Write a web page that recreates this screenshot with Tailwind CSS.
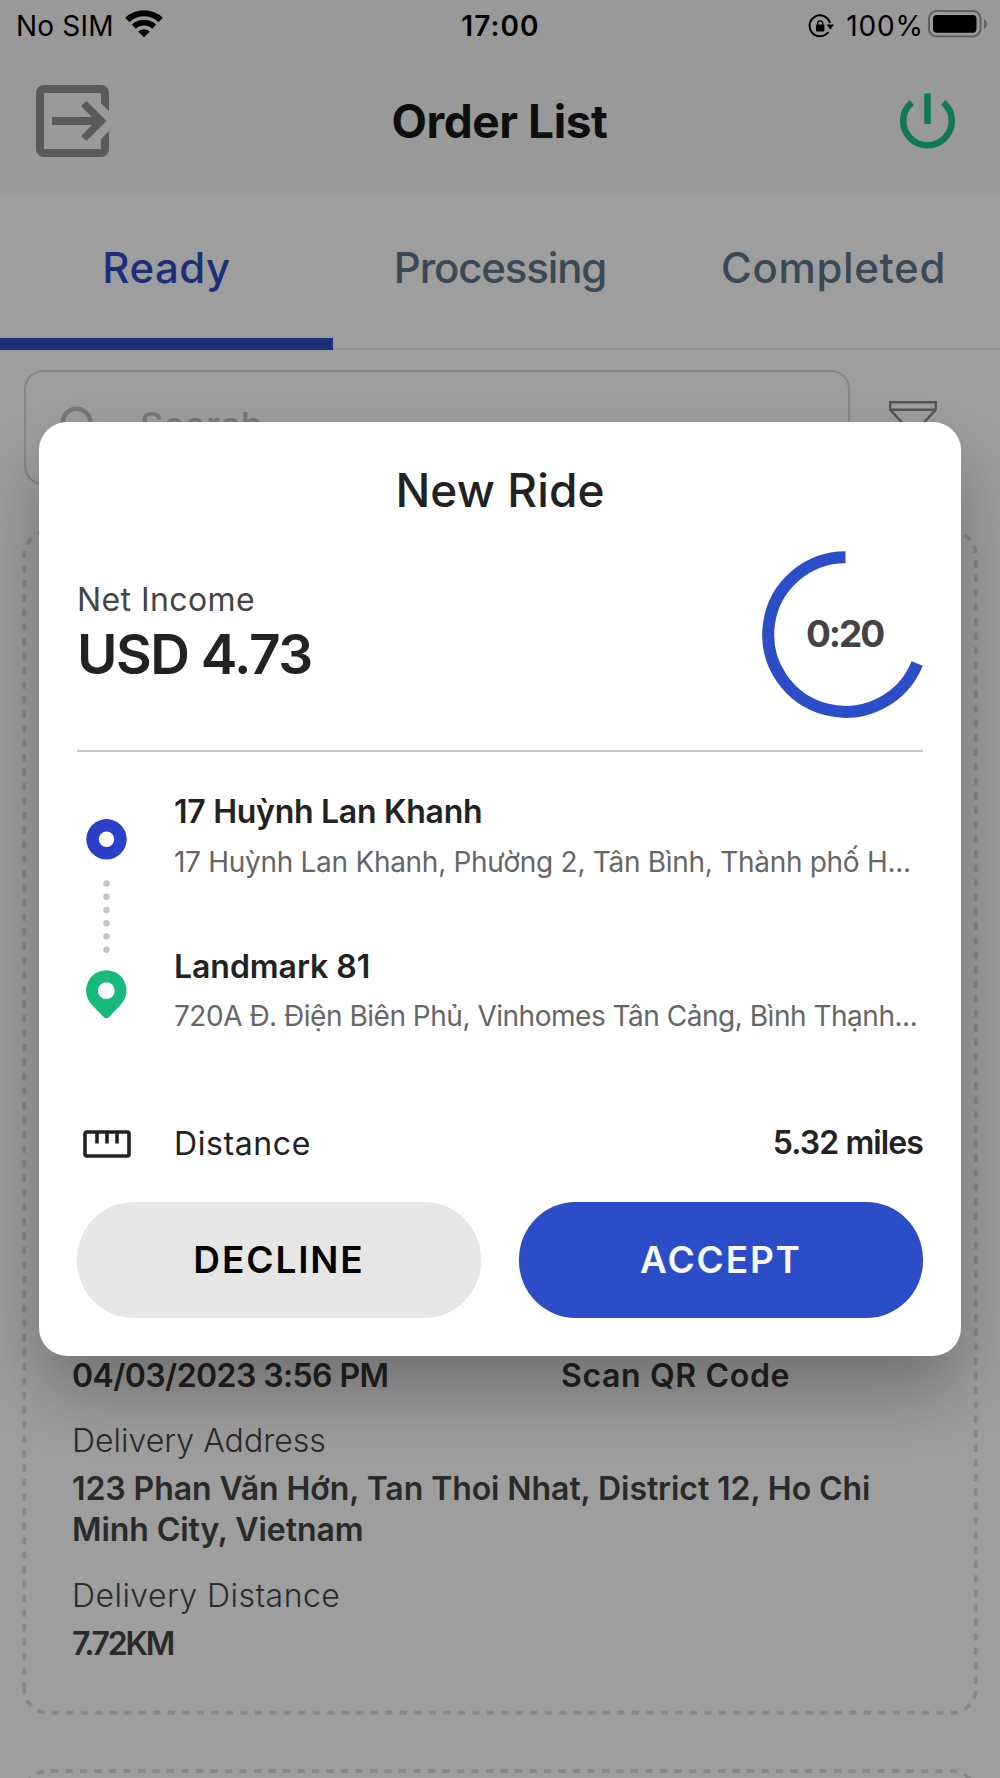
<!DOCTYPE html>
<html lang="vi">
<head>
<meta charset="utf-8">
<title>Order List</title>
<script src="https://cdn.jsdelivr.net/npm/@tailwindcss/browser@4"></script>
</head>
<body class="bg-[#9e9e9e]">
<div class="relative h-[1778px] w-[1000px] overflow-hidden bg-[#9e9e9e] font-['Inter',sans-serif] whitespace-nowrap text-[#2a2a2a]">

  <!-- Header -->
  <header class="h-[193px] bg-[#999]">
    <div class="grid h-[52px] grid-cols-3 items-center pr-3 pl-4 text-[28px] leading-[52px] text-black">
      <div class="flex items-center">
        <span class="tracking-[0.2px]">No SIM</span>
        <svg class="-mt-1 ml-[11px]" width="38" height="28" viewBox="0 0 38 28" fill="none" stroke="#000">
          <path d="M2.3 10A24 24 0 0 1 35.7 10" stroke-width="6"/>
          <path d="M8.8 16.7A14.9 14.9 0 0 1 29.2 16.7" stroke-width="5.8"/>
          <path d="M19 27.3L13.2 21.6Q19 17 24.8 21.6Z" fill="#000" stroke="none"/>
        </svg>
      </div>
      <div class="-ml-[3px] text-center font-semibold tracking-[1.1px]">17:00</div>
      <div class="flex items-center justify-end">
        <svg width="27" height="24" viewBox="0 0 27 24" fill="none" stroke="#000" stroke-width="2">
          <path d="M22 9A10.4 10.4 0 1 0 20.3 18"/>
          <path d="M18.6 10.5H26L22.3 15.8Z" fill="#000" stroke="none"/>
          <rect x="8" y="10.5" width="8.4" height="7" rx="1" fill="#000" stroke="none"/>
          <path d="M9.7 11V9.3a2.5 2.5 0 0 1 5 0V11" stroke-width="1.3"/>
        </svg>
        <span class="ml-[11px] tracking-[0.9px]">100%</span>
        <svg class="-mt-1 ml-[4px]" width="60" height="28" viewBox="0 0 60 28">
          <rect x="1" y="1" width="51.5" height="25.5" rx="7.5" fill="none" stroke="#606060" stroke-width="2"/>
          <rect x="5" y="5" width="43.5" height="17.7" rx="4" fill="#000"/>
          <path d="M56 9Q59 11 59 14T56 19Z" fill="#606060"/>
        </svg>
      </div>
    </div>
    <div class="flex h-[138px] items-center justify-between pr-[45px] pl-9">
      <svg width="73" height="72" viewBox="0 0 73 72" fill="#5a5a5a">
        <path d="M8 0H65a8 8 0 0 1 8 8V26L65 18V8H8V64H65V54L73 46V64a8 8 0 0 1-8 8H8a8 8 0 0 1-8-8V8a8 8 0 0 1 8-8Z"/>
        <path d="M16 32H56L45 21L50.5 16L70.5 36L50.5 56L45 51L56 40H16Z"/>
      </svg>
      <h1 class="-ml-[10px] text-[46px] leading-none font-bold tracking-[-0.4px] text-[#0e0e0e]">Order List</h1>
      <svg width="55" height="56" viewBox="0 0 55 56" fill="none" stroke="#0f7a4f" stroke-width="6.5">
        <path d="M11.8 9.4A24.3 24.3 0 1 0 43.2 9.4"/>
        <path d="M27.5 .5V31"/>
      </svg>
    </div>
  </header>

  <!-- Tabs -->
  <nav class="flex h-[157px] border-b-2 border-[#929292] text-[42px] leading-[149px] font-medium text-[#394955]">
    <div class="h-[157px] w-[333px] border-b-[12px] border-[#1d2e7b] text-center tracking-[0.5px] text-[#1d2e7b]">Ready</div>
    <div class="w-[334px] text-center tracking-[-1.15px]">Processing</div>
    <div class="w-[333px] text-center tracking-[0.65px]">Completed</div>
  </nav>

  <!-- Search row -->
  <div class="flex pt-5 pl-6">
    <div class="flex h-[115px] w-[826px] items-center rounded-[19px] border-2 border-[#868686] pl-[34px]">
      <svg width="44" height="44" viewBox="0 0 44 44" fill="none" stroke="#777" stroke-width="4.5">
        <circle cx="16.5" cy="16.5" r="13.8"/><path d="M27 27L41 41"/>
      </svg>
      <span class="-mt-1.5 ml-[36px] text-[36px] leading-none font-medium tracking-[0.3px] text-[#787878]">Search</span>
    </div>
    <svg class="mt-[31px] ml-[39px]" width="48" height="54" viewBox="0 0 48 54" fill="none" stroke="#545454" stroke-width="2.4">
      <path d="M1.2 1.2H46.8V8.8L29 28V44L19 52V28L1.2 8.8ZM1 8.8H47"/>
    </svg>
  </div>

  <!-- Order card -->
  <section class="relative mt-[46px] h-[1181px] px-[72px] pt-[824px] text-[32px] leading-[42px]">
    <svg class="absolute top-0 left-0" width="1000" height="1185" fill="none" stroke="#878787" stroke-width="3.8" stroke-dasharray="7.25 7.25">
      <path d="M24.2 1158.3V24.5A24 24 0 0 1 48.2 .5H951.8A24 24 0 0 1 975.8 24.5V1158.3A23.4 23.4 0 0 1 952.4 1181.7H47.6A23.4 23.4 0 0 1 24.2 1158.3"/>
    </svg>
    <div class="flex font-semibold text-[#222]">
      <span class="w-[489px] tracking-[-0.58px]">04/03/2023 3:56 PM</span>
      <span class="tracking-[0.64px]">Scan QR Code</span>
    </div>
    <div class="mt-[23px] font-light tracking-[0.02px]">Delivery Address</div>
    <div class="mt-[6px] leading-[41px] font-semibold tracking-[-0.08px]">123 Phan Văn Hớn, Tan Thoi Nhat, District 12, Ho Chi<br>Minh City, Vietnam</div>
    <div class="mt-[25px] font-light tracking-[0.45px]">Delivery Distance</div>
    <div class="mt-[6px] font-semibold tracking-[-2.2px]">7.72KM</div>
  </section>

  <!-- Next order card -->
  <svg class="mt-[56px]" width="1000" height="60" fill="none" stroke="#878787" stroke-width="3.8" stroke-dasharray="7.25 7.25">
    <path d="M24.2 50V27A24 24 0 0 1 48.2 3H951.8A24 24 0 0 1 975.8 27V60" stroke-dashoffset="9.3"/>
  </svg>

  <!-- New ride dialog -->
  <div class="absolute top-[421.5px] left-[39px] flex h-[934.5px] w-[922px] flex-col rounded-[28px] bg-white px-[38px] text-[#222] shadow-[0_38px_70px_rgba(0,0,0,0.28)]">
    <h2 class="pt-[44px] text-center text-[46px] leading-[48px] font-medium tracking-[0.1px]">New Ride</h2>
    <div class="mt-[37px] -mr-[6px] flex h-[167px] justify-between">
      <div class="pt-[28px]">
        <div class="text-[32px] leading-[42px] tracking-[0.42px] text-[#444]">Net Income</div>
        <div class="mt-[3px] text-[55px] leading-[60px] font-semibold tracking-[-1.5px]">USD 4.73</div>
      </div>
      <div class="relative flex h-[167px] w-[167px] items-center justify-center">
        <svg class="absolute inset-0" width="167" height="167" fill="none" stroke="#2c4dc8" stroke-width="12">
          <path d="M83.5 6.2A77.3 77.3 0 1 0 155.2 112.4"/>
        </svg>
        <span class="-ml-[2px] text-[37px] font-bold tracking-[-2.1px] text-[#444]">0:20</span>
      </div>
    </div>
    <div class="mt-[32px] h-[2px] w-full bg-[#c8c8c8]"></div>

    <div class="mt-[38px] flex">
      <svg class="mt-[29px] ml-[9px] shrink-0" width="41" height="201" viewBox="0 0 41 201">
        <circle cx="20.5" cy="20.3" r="20.2" fill="#2a40c8"/><circle cx="20.5" cy="20.3" r="7.7" fill="#fff"/>
        <path d="M20.5 64.5V131.5" stroke="#c4c4c4" stroke-width="6.4" stroke-linecap="round" stroke-dasharray="0 13.26"/>
        <path d="M20.3 151.2A20.2 20.2 0 0 1 40.5 171.4C40.5 178 37.5 182.5 34 186.5L22.6 198.4Q20.3 200.3 18 198.4L6.6 186.5C3 182.5 .1 178 .1 171.4A20.2 20.2 0 0 1 20.3 151.2Z" fill="#18ba7c"/>
        <circle cx="20.3" cy="171.7" r="8.4" fill="#fff"/>
      </svg>
      <div class="ml-[47px] leading-[44px]">
        <div class="text-[32px] font-semibold tracking-[-0.28px]">17 Huỳnh Lan Khanh</div>
        <div class="mt-[6px] text-[28px] tracking-[-0.29px] text-[#666]">17 Huỳnh Lan Khanh, Phường 2, Tân Bình, Thành phố H...</div>
        <div class="mt-[61px] text-[32px] font-semibold tracking-[-0.05px]">Landmark 81</div>
        <div class="mt-[5px] text-[28px] tracking-[-0.48px] text-[#666]">720A Đ. Điện Biên Phủ, Vinhomes Tân Cảng, Bình Thạnh...</div>
      </div>
    </div>

    <div class="mt-[82px] flex items-center text-[32px] leading-[44px]">
      <svg class="mt-[2px] ml-[6px]" width="48" height="28" viewBox="0 0 48 28" fill="none" stroke="#222" stroke-width="3.6">
        <rect x="2" y="2" width="44" height="24" rx="1.8"/>
        <path d="M14 3V13.5M24 3V13.5M34 3V13.5"/>
      </svg>
      <span class="mt-[2px] ml-[43px] tracking-[0.6px]">Distance</span>
      <span class="ml-auto font-semibold tracking-[-0.9px]">5.32 miles</span>
    </div>

    <div class="mt-[36px] flex gap-[38px] text-[37px] leading-[116px] font-semibold">
      <button class="h-[116px] flex-1 rounded-[57px] bg-[#e6e6e6] tracking-[1.9px] text-black">DECLINE</button>
      <button class="h-[116px] flex-1 rounded-[57px] bg-[#2c4dc8] tracking-[1.85px] text-[#f8f8f8]">ACCEPT</button>
    </div>
  </div>
</div>
</body>
</html>
